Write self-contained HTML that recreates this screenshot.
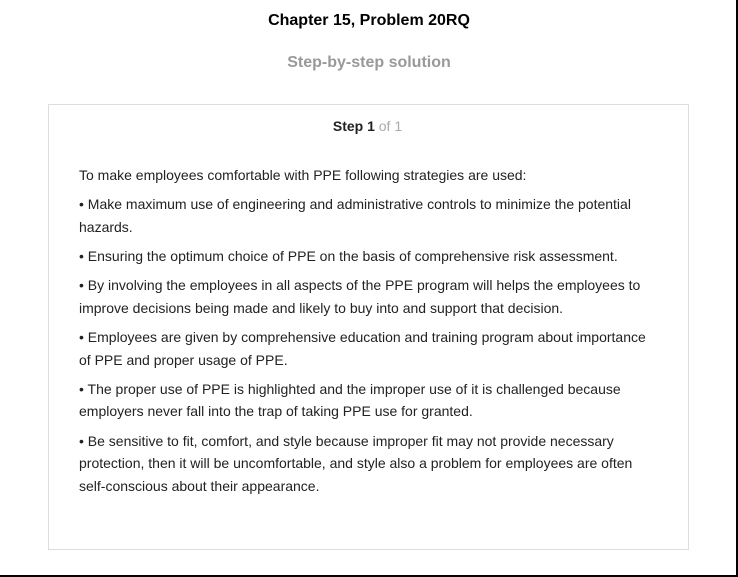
<!DOCTYPE html>
<html><head><style>
body{margin:0;width:738px;height:577px;position:relative;background:#fff;font-family:"Liberation Sans",Arial,sans-serif;color:#222;overflow:hidden}
.fr{position:absolute;left:0;top:0;width:736px;height:575px;border-right:2px solid #000;border-bottom:2px solid #000}
h1{position:absolute;top:12px;left:0;width:738px;text-align:center;font-size:16px;margin:0;font-weight:bold;color:#000}
h2{position:absolute;top:54px;left:0;width:738px;text-align:center;font-size:16px;margin:0;font-weight:bold;color:#999}
.box{position:absolute;left:48px;top:104px;width:639px;height:444px;border:1px solid #ddd}
.st{position:absolute;top:13px;left:-1px;width:639px;text-align:center;font-size:14px}
.st span{color:#aaa}
.c{position:absolute;left:30px;top:59px;width:580px;font-size:14px;line-height:22.5px}
.c p{margin:0 0 6.8px}
</style></head><body>
<div class="fr"></div>
<h1>Chapter 15, Problem 20RQ</h1>
<h2>Step-by-step solution</h2>
<div class="box">
<div class="st"><b>Step 1</b> <span>of 1</span></div>
<div class="c">
<p>To make employees comfortable with PPE following strategies are used:</p>
<p>• Make maximum use of engineering and administrative controls to minimize the potential hazards.</p>
<p>• Ensuring the optimum choice of PPE on the basis of comprehensive risk assessment.</p>
<p>• By involving the employees in all aspects of the PPE program will helps the employees to improve decisions being made and likely to buy into and support that decision.</p>
<p>• Employees are given by comprehensive education and training program about importance of PPE and proper usage of PPE.</p>
<p>• The proper use of PPE is highlighted and the improper use of it is challenged because employers never fall into the trap of taking PPE use for granted.</p>
<p>• Be sensitive to fit, comfort, and style because improper fit may not provide necessary protection, then it will be uncomfortable, and style also a problem for employees are often self-conscious about their appearance.</p>
</div>
</div>
</body></html>
